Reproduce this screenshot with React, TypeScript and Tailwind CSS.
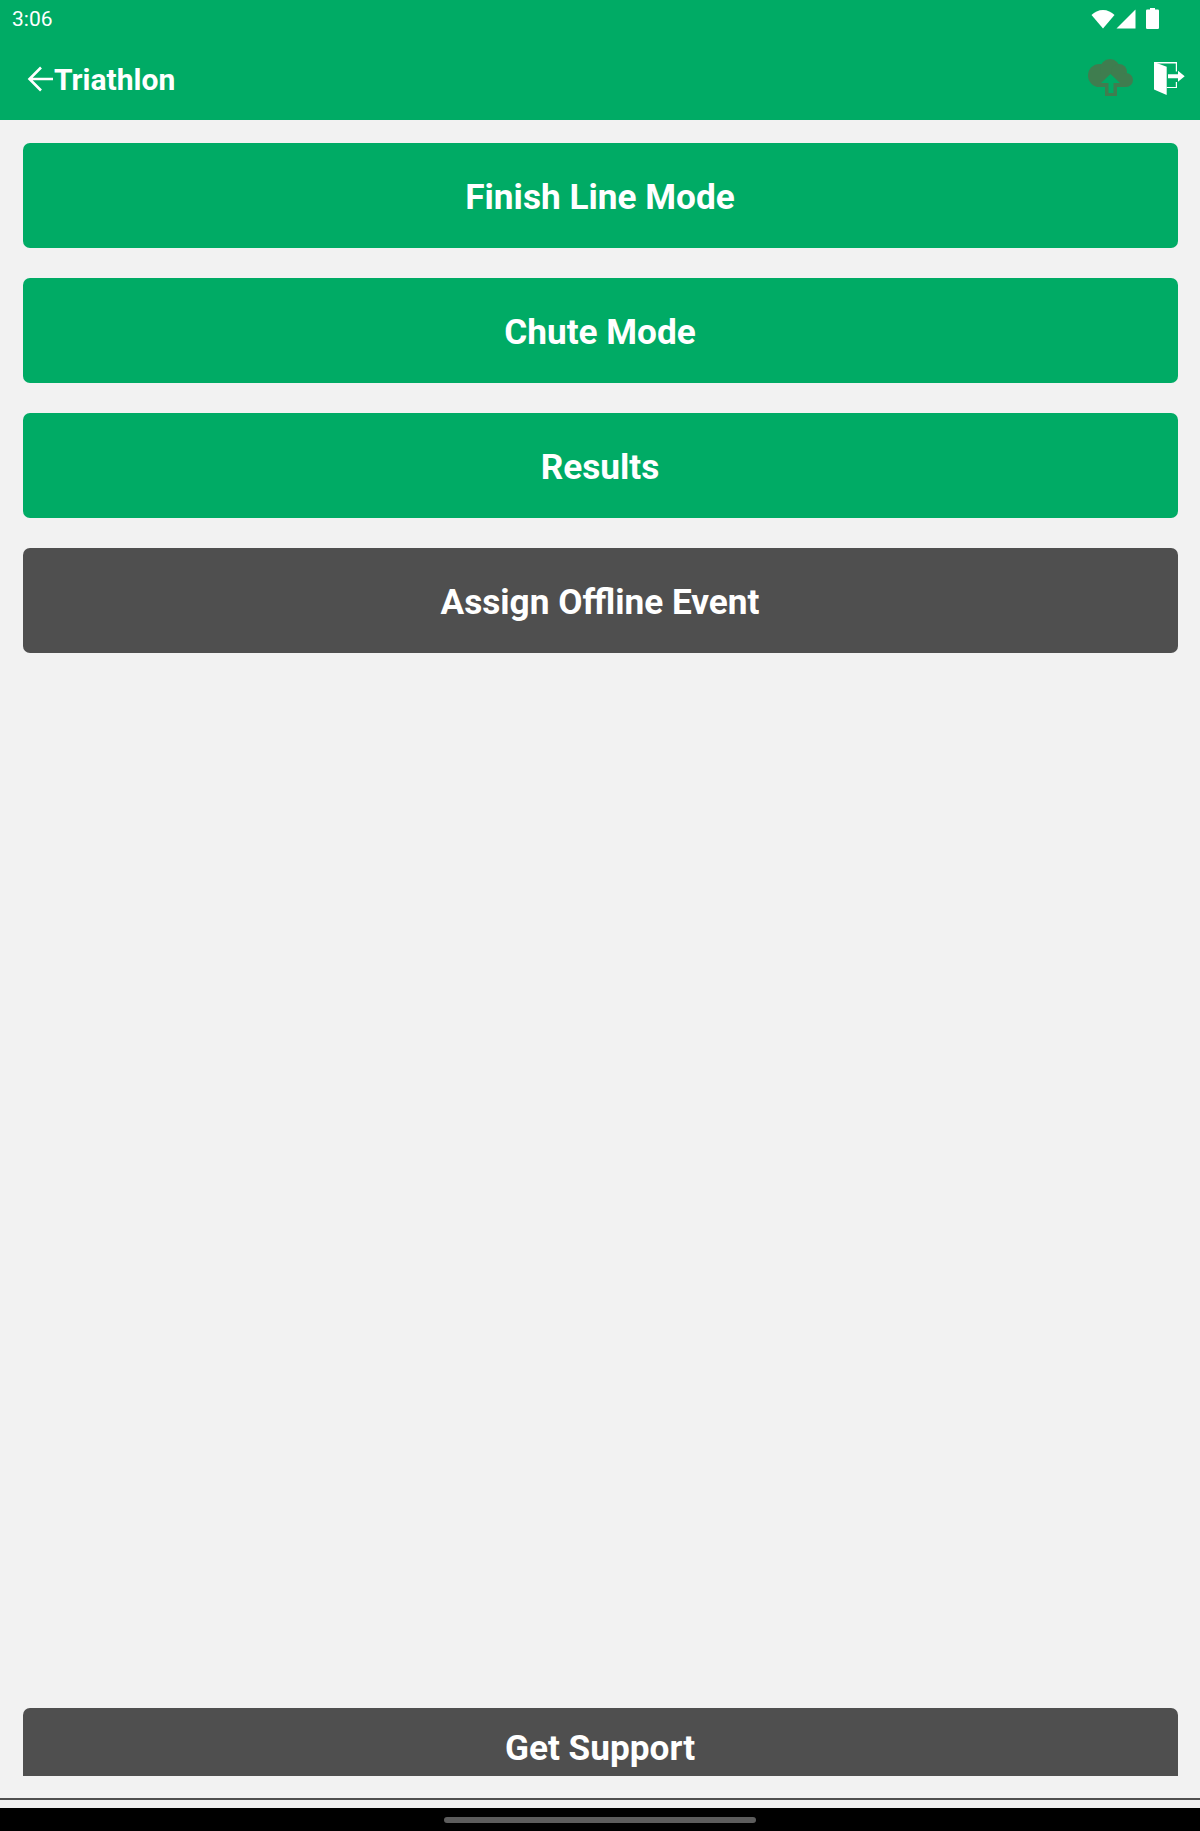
const font = { fontFamily: 'Roboto, sans-serif' }

function ActionButton({ label, dark, tall }: { label: string; dark?: boolean; tall?: boolean }) {
  return (
    <button
      className={`flex w-full shrink-0 items-center justify-center rounded-[7px] pr-[1px] pt-[4px] text-[35.2px] font-bold text-white ${tall ? 'h-[77px] rounded-b-none' : 'h-[105px]'} ${dark ? 'bg-[#4f4f4f]' : 'bg-[#00ab65]'}`}
    >
      {label}
    </button>
  )
}

function StatusIcons() {
  return (
    <div className="flex items-center pr-[41px]">
      <svg width="24" height="20" viewBox="0 0 24 20" className="mr-[1px]">
        <path d="M0.500 6C3.500 3 7.500 1 12 1s8.500 2 11.500 5L12 19.500z" fill="#fff" />
      </svg>
      <svg width="20" height="20" viewBox="0 0 20 20" className="mr-[10px]">
        <path d="M19.500 0.500V19.500H0.500z" fill="#fff" />
      </svg>
      <svg width="13" height="21" viewBox="0 0 13 21">
        <path d="M4 0h5v1.500h2.800a1.200 1.200 0 0 1 1.200 1.200v17.100a1.200 1.200 0 0 1-1.200 1.200H1.200A1.200 1.200 0 0 1 0 19.800V2.700a1.200 1.200 0 0 1 1.200-1.200H4z" fill="#fff" />
      </svg>
    </div>
  )
}

function CloudIcon() {
  return (
    <svg width="46" height="38" viewBox="0 0 46 38" className="-mt-[2px]">
      <g fill="#3f7d4f">
        <circle cx="11.500" cy="16.500" r="11.500" />
        <circle cx="22" cy="10" r="10" />
        <circle cx="31" cy="13" r="8" />
        <circle cx="38" cy="21" r="7" />
        <rect x="11" y="15" width="27" height="13" />
      </g>
      <path d="M13 24L22.500 15L32 24H25.500V34H20.500V24z" fill="#00ab65" />
      <path d="M17 28h3.500V34H25.500V28H29V37H17z" fill="#3f7d4f" />
    </svg>
  )
}

function ExitIcon() {
  return (
    <svg width="31" height="34" viewBox="0 0 31 34">
      <path d="M0 0L12.700 4.700V33L0 27.500z" fill="#fff" />
      <path d="M0 0H23V9.500H21.800V1.500H0zM21.800 20H23V26H12.700V25H21.800z" fill="#fff" />
      <path d="M14 12.300H24V8.700L30.700 14.300L24 19.700V16.300H14z" fill="#fff" />
    </svg>
  )
}

export default function App() {
  return (
    <div style={font} className="flex h-[1831px] w-[1200px] flex-col overflow-hidden bg-[#f2f2f2]">
      <header className="h-[120px] shrink-0 bg-[#00ab65] text-white">
        <div className="flex h-[37px] items-center justify-between pl-3">
          <span className="pt-[1px] text-[21px] leading-none">3:06</span>
          <StatusIcons />
        </div>
        <div className="flex h-[83px] items-center justify-between pl-[27px] pr-[15px]">
          <div className="flex items-center">
            <svg width="27" height="26" viewBox="0 0 27 26" fill="none" stroke="#fff" strokeWidth="2.600">
              <path d="M26 13H3M14 1.500L2.500 13L14 24.500" />
            </svg>
            <span className="pt-[3px] text-[30px] font-bold leading-none">Triathlon</span>
          </div>
          <div className="flex items-center gap-[20px]">
            <CloudIcon />
            <ExitIcon />
          </div>
        </div>
      </header>

      <main className="flex h-[1656px] shrink-0 flex-col overflow-hidden pl-[23px] pr-[22px] pt-[23px]">
        <div className="flex flex-col gap-[30px]">
          <ActionButton label="Finish Line Mode" />
          <ActionButton label="Chute Mode" />
          <ActionButton label="Results" />
          <ActionButton label="Assign Offline Event" dark />
        </div>
        <div className="mt-[1055px]">
          <ActionButton label="Get Support" dark tall />
        </div>
      </main>

      <div className="mt-[22px] h-[2px] shrink-0 bg-[#505050]" />
      <div className="mt-[8px] flex h-[23px] shrink-0 items-center justify-center bg-black">
        <div className="h-[6px] w-[312px] rounded-full bg-[#5c5c5c]" />
      </div>
    </div>
  )
}
